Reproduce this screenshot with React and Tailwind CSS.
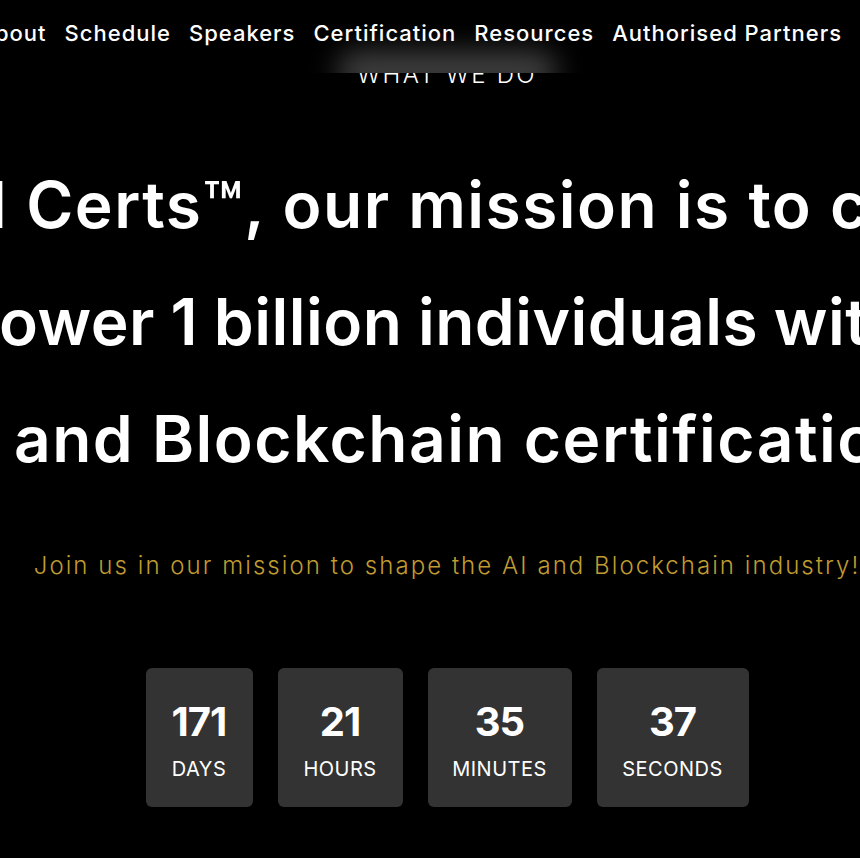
export default function App() {
  const items = ["About", "Schedule", "Speakers", "Certification", "Resources", "Authorised Partners"];
  const boxes = [
    { n: "171", l: "DAYS", w: "w-[107px]" },
    { n: "21", l: "HOURS", w: "w-[125px]" },
    { n: "35", l: "MINUTES", w: "w-[144px]" },
    { n: "37", l: "SECONDS", w: "w-[152px]" },
  ];
  return (
    <div className="relative w-full h-[858px] bg-black overflow-hidden text-white font-[Inter,'Noto_Sans',sans-serif]">
      <header className="absolute inset-x-0 top-0 h-[73px] z-10 bg-black overflow-hidden">
        <div className="absolute left-[337px] bottom-[-18px] w-[220px] h-[40px] rounded-full bg-white/25 blur-[14px]" />
        <nav className="relative flex justify-end gap-[18px] pr-[18px] pt-[19px] whitespace-nowrap text-[22px] font-medium leading-[28px] tracking-[1px]">
          {items.map((t) => (
            <span key={t}>{t}</span>
          ))}
        </nav>
      </header>
      <main className="flex flex-col pt-[61px]">
        <div className="w-[1200px] ml-[-153px] flex justify-center">
          <div className="text-[24px] font-light tracking-[2.3px] leading-[28px] uppercase">What we do</div>
        </div>
        <h1 className="mt-[57px] flex flex-col whitespace-nowrap text-[64px] font-semibold leading-[117px] tracking-[1.5px]">
          <span className="ml-[-147px]">At AI Certs™, our mission is to collectively</span>
          <span className="ml-[-138px] tracking-[0.5px] [word-spacing:-1px]">empower 1 billion individuals with</span>
          <span className="ml-[-71px]">AI and Blockchain certifications</span>
        </h1>
        <div className="w-[1200px] ml-[-153px] flex flex-col items-center">
          <p className="mt-[54px] whitespace-nowrap text-[24px] font-light leading-[30px] tracking-[2.05px] text-[#c09c30]">
            Join us in our mission to shape the AI and Blockchain industry!
          </p>
          <div className="mt-[87px] flex gap-[25px]">
            {boxes.map((b) => (
              <div key={b.l} className={`${b.w} h-[139px] rounded-[6px] bg-[#333333] flex flex-col items-center justify-center pt-[5px]`}>
                <div className="text-[40px] font-bold leading-[44px] tracking-[-1px]">{b.n}</div>
                <div className="mt-[13px] text-[20px] font-normal leading-[24px] tracking-[0.5px]">{b.l}</div>
              </div>
            ))}
          </div>
        </div>
      </main>
    </div>
  );
}
